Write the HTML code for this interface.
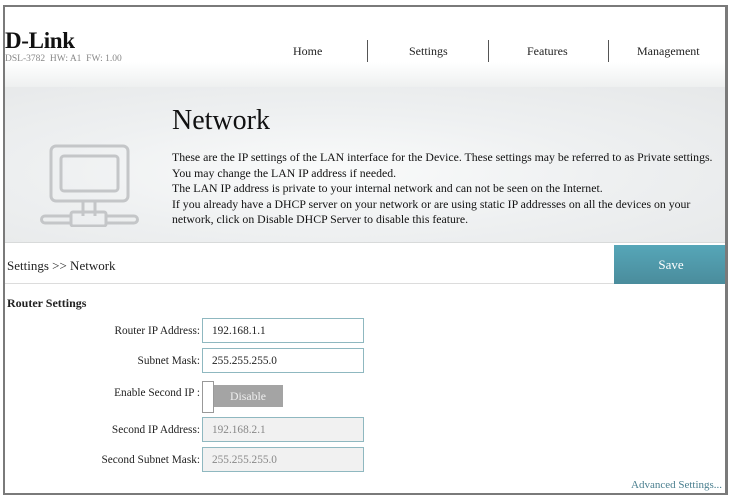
<!DOCTYPE html>
<html><head><meta charset="utf-8"><style>
*{margin:0;padding:0;box-sizing:border-box}
body{width:731px;height:498px;background:#fff;font-family:"Liberation Serif",serif;color:#222;position:relative;overflow:hidden}
.frame{position:absolute;left:3px;top:5px;width:725px;height:490px;border:2px solid #7a7a7a;border-right-width:3px;overflow:hidden}
.abs{position:absolute}
.hdr{left:0;top:0;width:100%;height:80px;background:linear-gradient(#fff 0,#fff 55px,#eef0f0 80px)}
.ban{left:0;top:80px;width:100%;height:156px;background:radial-gradient(ellipse at 45% 55%,#fafbfb 0,#eef0f1 50%,#e6e8e9 100%);border-bottom:1px solid #d8dada}
.nav{top:37px;font-size:12px}
.sep{top:33px;width:1px;height:22px;background:#555}
p.d{font-size:11.8px;line-height:15.6px;color:#111}
.lbl{font-size:11.3px;text-align:right;width:195px;left:0}
.inp{left:197px;width:162px;height:25px;border:1px solid #8fb8c0;font-size:11.3px;padding:6px 0 0 9px}
</style></head><body>
<div class="frame">
<div class="abs hdr"></div>
<div class="abs" style="left:0;top:21px;font-size:23px;font-weight:bold;letter-spacing:-0.3px;color:#111">D-Link</div>
<div class="abs" style="left:0;top:47px;font-size:9.5px;color:#888">DSL-3782 &nbsp;HW: A1 &nbsp;FW: 1.00</div>
<div class="abs nav" style="left:288px">Home</div>
<div class="abs sep" style="left:362px"></div>
<div class="abs nav" style="left:404px">Settings</div>
<div class="abs sep" style="left:483px"></div>
<div class="abs nav" style="left:522px">Features</div>
<div class="abs sep" style="left:603px"></div>
<div class="abs nav" style="left:632px">Management</div>
<div class="abs sep" style="left:721px"></div>
<div class="abs ban"></div>
<svg class="abs" style="left:28px;top:135px" width="110" height="85" viewBox="0 0 110 85">
<g fill="none" stroke="#c4c6c8" stroke-width="3">
<rect x="18" y="4" width="77" height="55" rx="5"/>
<rect x="28" y="14" width="57" height="35" rx="3"/>
<path d="M50 59v15M62 59v15"/>
<rect x="38" y="70" width="35" height="14" rx="2"/>
<path d="M38 74H12a3.5 3.5 0 0 0 0 7H38M73 74h28a3.5 3.5 0 0 1 0 7H73"/>
</g></svg>
<div class="abs" style="left:167px;top:98px;font-size:28px;color:#111">Network</div>
<div class="abs" style="left:167px;top:143px;width:565px"><p class="d">These are the IP settings of the LAN interface for the Device. These settings may be referred to as Private settings.<br>You may change the LAN IP address if needed.<br>The LAN IP address is private to your internal network and can not be seen on the Internet.<br>If you already have a DHCP server on your network or are using static IP addresses on all the devices on your<br>network, click on Disable DHCP Server to disable this feature.</p></div>
<div class="abs" style="left:0;top:236px;width:100%;height:41px;border-bottom:1px solid #dcdcdc;background:#fff"></div>
<div class="abs" style="left:2px;top:251px;font-size:13px">Settings &gt;&gt; Network</div>
<div class="abs" style="left:609px;top:238px;width:114px;height:39px;background:linear-gradient(#56a6b8,#4a8c9c);color:#fff;font-size:13px;text-align:center;line-height:39px">Save</div>
<div class="abs" style="left:2px;top:289px;font-size:12px;font-weight:bold">Router Settings</div>
<div class="abs lbl" style="top:318px">Router IP Address:</div>
<div class="abs inp" style="top:311px">192.168.1.1</div>
<div class="abs lbl" style="top:348px">Subnet Mask:</div>
<div class="abs inp" style="top:341px">255.255.255.0</div>
<div class="abs lbl" style="top:380px">Enable Second IP :</div>
<div class="abs" style="left:208px;top:378px;width:70px;height:22px;background:#a4a4a4;color:#eee;font-size:11.8px;text-align:center;line-height:22px">Disable</div>
<div class="abs" style="left:197px;top:374px;width:12px;height:32px;border:1px solid #999;background:#fff"></div>
<div class="abs lbl" style="top:417px">Second IP Address:</div>
<div class="abs inp" style="top:410px;background:#f1f1f1;color:#888">192.168.2.1</div>
<div class="abs lbl" style="top:447px">Second Subnet Mask:</div>
<div class="abs inp" style="top:440px;background:#f1f1f1;color:#888">255.255.255.0</div>
<div class="abs" style="left:626px;top:472px;font-size:11px;color:#4a7f8f">Advanced Settings...</div>
</div>
</body></html>
